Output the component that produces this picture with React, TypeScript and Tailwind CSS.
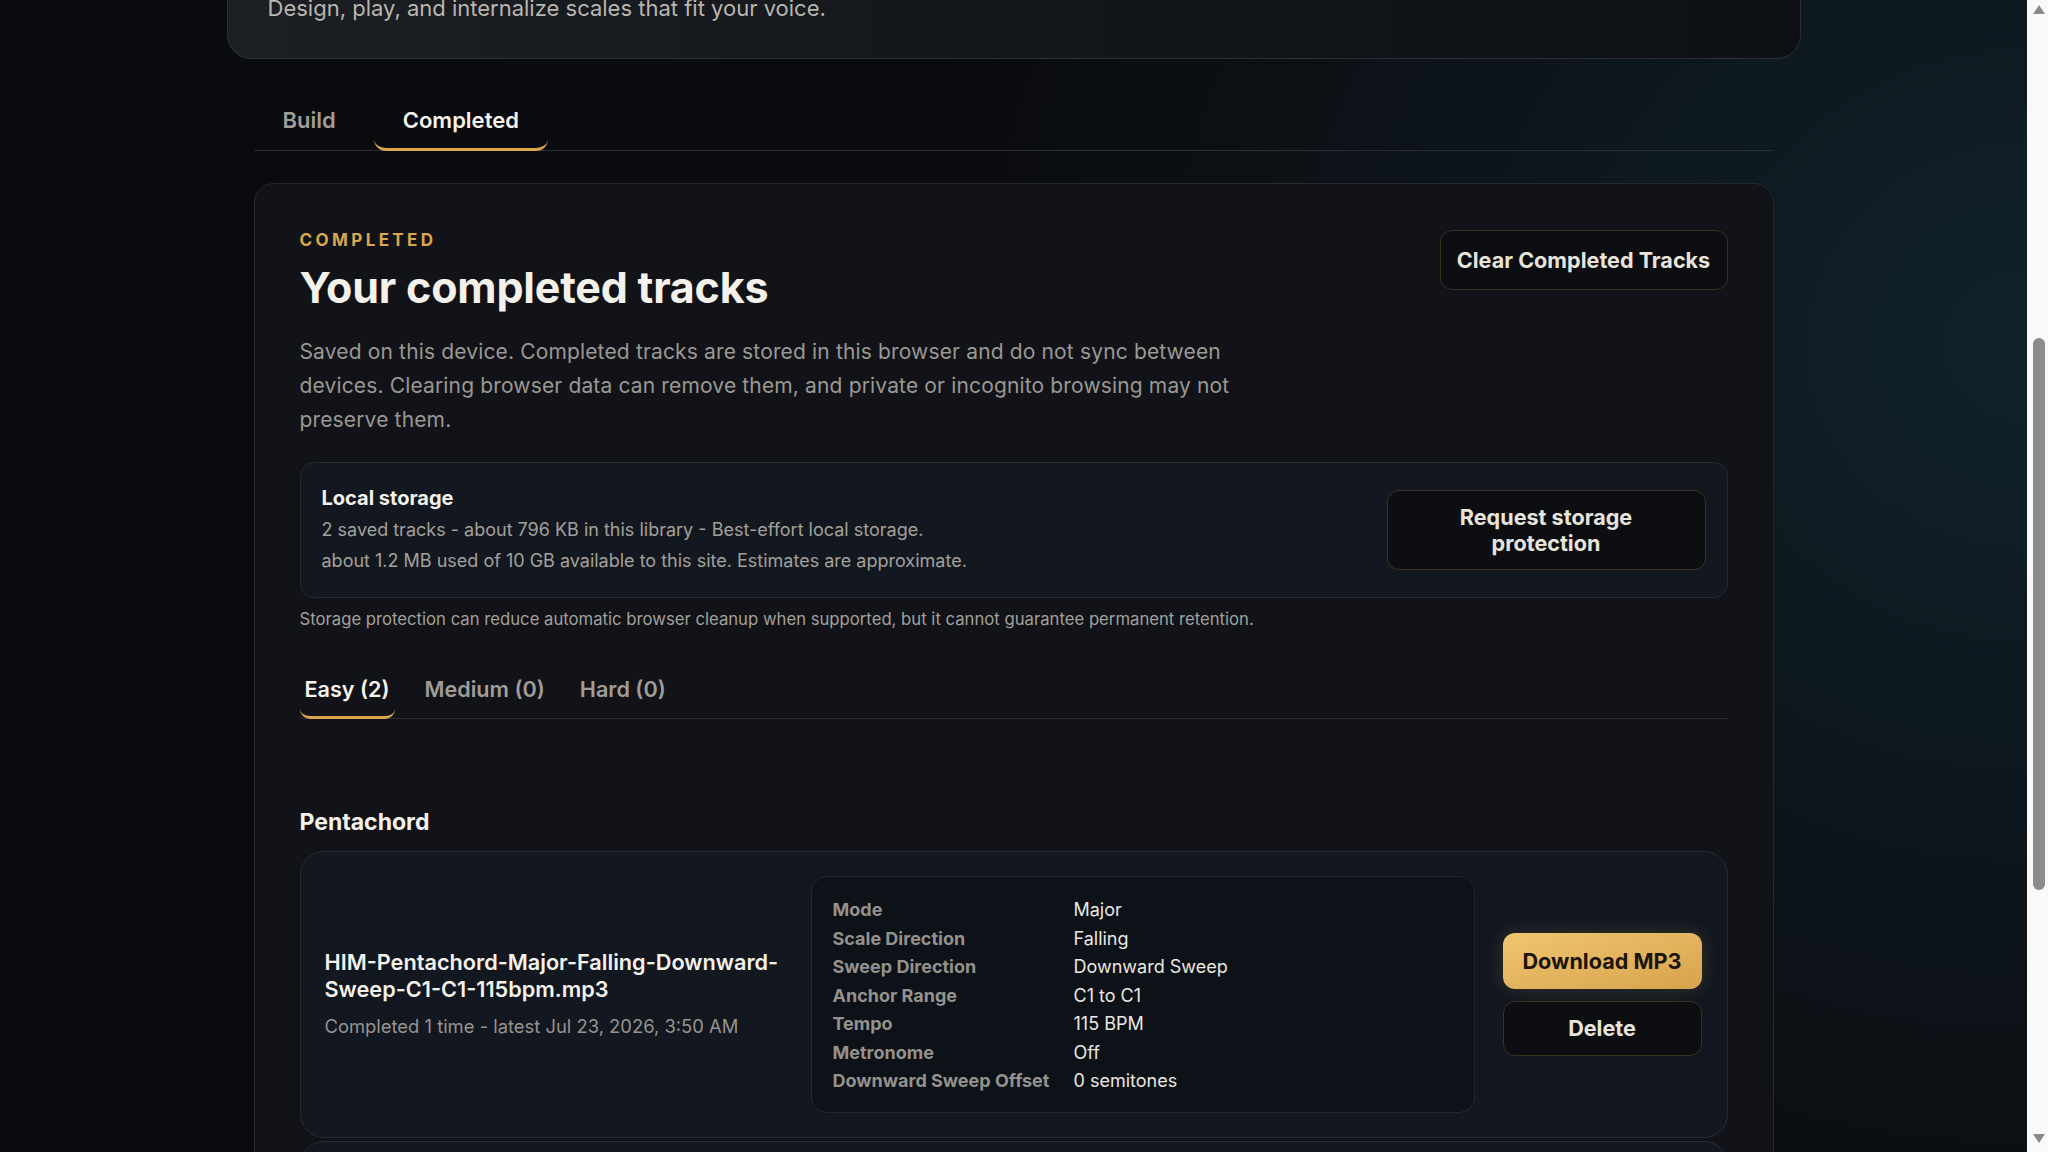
import React, { useState } from 'react';

const details = [
  { label: 'Mode', value: 'Major' },
  { label: 'Scale Direction', value: 'Falling' },
  { label: 'Sweep Direction', value: 'Downward Sweep' },
  { label: 'Anchor Range', value: 'C1 to C1' },
  { label: 'Tempo', value: '115 BPM' },
  { label: 'Metronome', value: 'Off' },
  { label: 'Downward Sweep Offset', value: '0 semitones' },
];

const Scrollbar: React.FC = () => (
  <div className="w-[21px] shrink-0 bg-[#f9f9f9] flex flex-col items-center">
    <div className="mt-[5px] w-0 h-0 border-l-[6px] border-r-[6px] border-b-[9px] border-l-transparent border-r-transparent border-b-[#8a8a8a] ml-[3px]" />
    <div className="mt-[324px] w-[12px] h-[552px] rounded-full bg-[#8c8c8c] ml-[3px]" />
    <div className="mt-auto mb-[9px] w-0 h-0 border-l-[6px] border-r-[6px] border-t-[9px] border-l-transparent border-r-transparent border-t-[#8a8a8a] ml-[3px]" />
  </div>
);

const TrackCard: React.FC = () => (
  <div className="flex items-center rounded-[24px] border border-[#272b33] bg-[#121720] p-6">
    <div className="w-[462px] shrink-0">
      <h4 className="text-[21.7px] leading-[27px] font-semibold text-[#f4f1ea]">
        HIM-Pentachord-Major-Falling-Downward-Sweep-C1-C1-115bpm.mp3
      </h4>
      <p className="mt-[10px] text-[18.4px] leading-[26px] text-[#97948f]">
        Completed 1 time - latest Jul 23, 2026, 3:50 AM
      </p>
    </div>
    <div className="ml-6 w-[664px] shrink-0 rounded-[16px] border border-[#22262d] bg-[#0d1118] px-[21px] pt-[19px] pb-[16px]">
      {details.map((d) => (
        <div key={d.label} className="flex text-[18px] leading-[28.5px]">
          <span className="w-[241px] shrink-0 font-bold text-[#95928d]">{d.label}</span>
          <span className="text-[#ebe8e2]">{d.value}</span>
        </div>
      ))}
    </div>
    <div className="ml-7 flex w-[199px] shrink-0 flex-col gap-3">
      <button className="h-[56px] rounded-[12px] bg-gradient-to-br from-[#f0c571] to-[#d7a34c] text-[21.6px] font-bold text-[#1b150b] shadow-[0_0_18px_rgba(226,176,88,0.18)]">
        Download MP3
      </button>
      <button className="h-[55px] rounded-[12px] border border-[#3b3222] bg-[#0c0e12] text-[21.6px] font-bold text-[#e8e4dc]">
        Delete
      </button>
    </div>
  </div>
);

export default function App() {
  const [tab, setTab] = useState('completed');
  const [level, setLevel] = useState('easy');

  const levels = [
    { id: 'easy', label: 'Easy (2)' },
    { id: 'medium', label: 'Medium (0)' },
    { id: 'hard', label: 'Hard (0)' },
  ];

  return (
    <div
      className="flex h-screen overflow-hidden bg-[#0a0b0e]"
      style={{ fontFamily: 'Inter, "Noto Sans", sans-serif' }}
    >
      <div className="flex-1 overflow-hidden bg-[radial-gradient(ellipse_55%_90%_at_100%_30%,#10222a_0%,#0d151b_50%,#0a0b0e_100%)]">
        <div className="mx-auto w-[1520px]">
          {/* hero card, scrolled mostly out of view */}
          <div className="-mx-[27px] -mt-[40px] rounded-[24px] border border-[#2c2f34] bg-gradient-to-r from-[#1c1f23] via-[#13161a] to-[#0d1014] px-[40px] pt-[32px] pb-[35px]">
            <p className="text-[22px] leading-[30px] text-[#b9b6b0]">
              Design, play, and internalize scales that fit your voice.
            </p>
          </div>

          {/* view tabs */}
          <div className="mt-[33px] flex gap-[9px] border-b border-[#2a2d33]">
            {[
              { id: 'build', label: 'Build' },
              { id: 'completed', label: 'Completed' },
            ].map((t) => (
              <button
                key={t.id}
                onClick={() => setTab(t.id)}
                className={`-mb-px rounded-[12px] px-[29px] pt-[14px] pb-[14px] text-[22px] leading-[28px] font-semibold border-b-[3px] ${
                  tab === t.id ? 'border-[#d9a84e] text-[#f6f3ec]' : 'border-transparent text-[#a09d98]'
                }`}
              >
                {t.label}
              </button>
            ))}
          </div>

          {/* completed panel */}
          <div className="mt-[32px] rounded-[20px] border border-[#25282e] bg-[#111318] px-[45px] pt-[44px] pb-[40px]">
            <div className="flex items-start justify-between">
              <div>
                <p className="text-[17px] leading-[24px] font-bold tracking-[0.2em] text-[#d9a84e]">COMPLETED</p>
                <h2 className="mt-[11px] text-[43px] leading-[48px] font-bold tracking-[-0.2px] text-[#f4f1ea]">
                  Your completed tracks
                </h2>
                <p className="mt-[24px] max-w-[945px] text-[21px] leading-[34px] tracking-[0.15px] text-[#9b9893]">
                  Saved on this device. Completed tracks are stored in this browser and do not sync between devices.
                  Clearing browser data can remove them, and private or incognito browsing may not preserve them.
                </p>
              </div>
              <button className="mt-[2px] h-[60px] w-[288px] rounded-[12px] border border-[#3b3222] bg-[#0c0e12] text-[21.6px] font-bold text-[#e8e4dc]">
                Clear Completed Tracks
              </button>
            </div>

            <div className="mt-[25px] flex items-center justify-between rounded-[14px] border border-[#262b33] bg-[#131820] p-[21px]">
              <div>
                <h3 className="text-[20px] leading-[28px] font-bold text-[#f4f1ea]">Local storage</h3>
                <p className="mt-[2px] text-[18px] leading-[31px] text-[#a3a09b]">
                  2 saved tracks - about 796 KB in this library - Best-effort local storage.
                </p>
                <p className="text-[18px] leading-[31px] text-[#a3a09b]">
                  about 1.2 MB used of 10 GB available to this site. Estimates are approximate.
                </p>
              </div>
              <button className="h-[80px] w-[319px] rounded-[12px] border border-[#3b3222] bg-[#0c0e12] px-10 text-[21.6px] leading-[26px] font-bold text-[#e8e4dc]">
                Request storage protection
              </button>
            </div>

            <p className="mt-[9px] text-[16.7px] leading-[24px] text-[#a3a09b]">
              Storage protection can reduce automatic browser cleanup when supported, but it cannot guarantee permanent retention.
            </p>

            {/* difficulty tabs */}
            <div className="mt-[32px] flex gap-[25px] border-b border-[#2a2d33]">
              {levels.map((l) => (
                <button
                  key={l.id}
                  onClick={() => setLevel(l.id)}
                  className={`-mb-px rounded-[10px] px-[5px] pt-[12px] pb-[13px] text-[21.6px] leading-[28px] font-semibold border-b-[3px] ${
                    level === l.id ? 'border-[#d9a84e] text-[#f6f3ec]' : 'border-transparent text-[#a09d98]'
                  }`}
                >
                  {l.label}
                </button>
              ))}
            </div>

            <h3 className="mt-[89px] text-[23px] leading-[28px] font-bold text-[#f4f1ea]">Pentachord</h3>

            <div className="mt-[15px] flex flex-col gap-[3px]">
              <TrackCard />
              <TrackCard />
            </div>
          </div>
        </div>
      </div>
      <Scrollbar />
    </div>
  );
}
